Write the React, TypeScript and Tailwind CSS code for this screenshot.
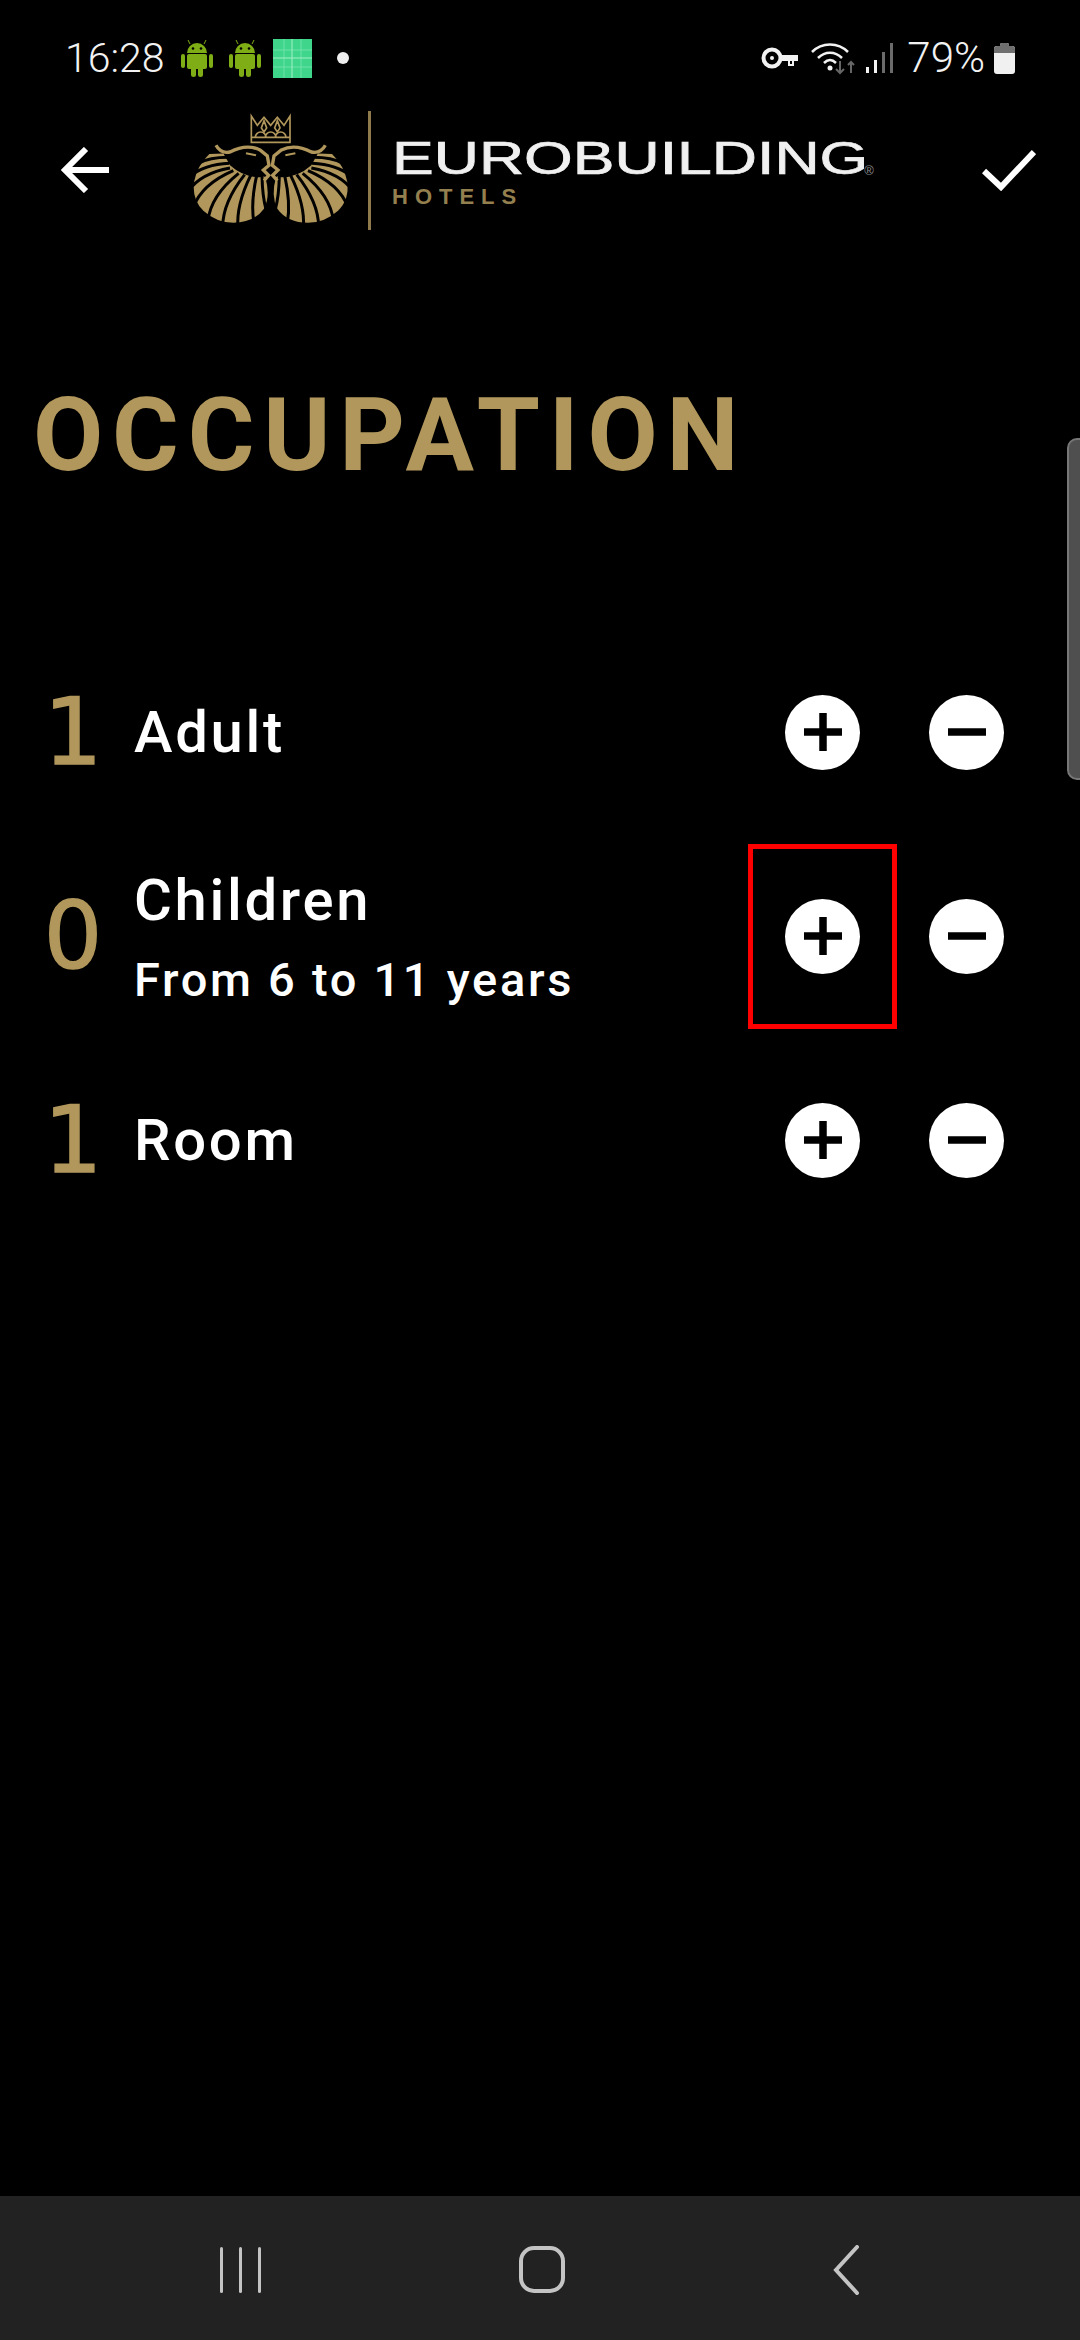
const GOLD = '#b1975b';

// black gaps that split the mane into strands: inner point, outer point, bulge (logo units)
const GAPS = [
  [150, 172, 55, 190, 12],
  [148, 190, 32, 228, 20],
  [150, 204, 26, 272, 28],
  [160, 212, 40, 322, 34],
  [176, 220, 84, 362, 34],
  [194, 224, 128, 380, 28],
  [212, 226, 174, 384, 22],
  [230, 226, 222, 368, 14],
  [246, 228, 258, 328, 6],
];

function gapPath([x1, y1, x2, y2, b]: number[]) {
  const dx = x2 - x1;
  const dy = y2 - y1;
  const len = Math.hypot(dx, dy);
  const cx = x1 + dx * 0.6 - (dy / len) * b;
  const cy = y1 + dy * 0.6 + (dx / len) * b;
  return `M${x1} ${y1}Q${cx} ${cy} ${x2} ${y2}`;
}

function Lion() {
  return (
    <g>
      <path
        d="M88 162Q52 196 42 246Q36 300 70 332Q110 368 160 368Q222 368 252 326Q272 288 256 232L150 160Z"
        fill={GOLD}
      />
      {GAPS.map((g, i) => (
        <path key={i} d={gapPath(g)} fill="none" stroke="#000" strokeWidth="9" />
      ))}
      <path d="M130 160Q150 150 205 148L258 170L262 196L244 210L262 226L240 232Q190 232 150 196Z" fill="#000" />
      <path
        d="M108 136Q122 162 150 156Q200 130 240 150L262 168L267 196L250 210L266 226L252 242"
        fill="none"
        stroke={GOLD}
        strokeWidth="10"
      />
      <path d="M198 160L228 166" stroke={GOLD} strokeWidth="6" />
    </g>
  );
}

function LogoMark() {
  return (
    <svg width="180" height="140" viewBox="0 0 540 420" className="shrink-0">
      <Lion />
      <g transform="translate(544 0) scale(-1 1)">
        <Lion />
      </g>
      <g fill="none" stroke={GOLD} strokeWidth="5">
        <path d="M214 127H330V48L312 76L292 52L272 76L252 52L232 76L214 48Z" />
        <path d="M214 112H330M226 112A16 16 0 0 1 258 112M256 112A16 16 0 0 1 288 112M286 112A16 16 0 0 1 318 112" />
        <path d="M252 62L244 84L252 96L260 84ZM292 62L284 84L292 96L300 84Z" />
      </g>
    </svg>
  );
}

function AndroidIcon() {
  return (
    <svg width="32" height="38" viewBox="0 0 32 38" fill="#7fad16">
      <path d="M6 14A10 10 0 0 1 26 14Z" />
      <path d="M9 5L7 1M23 5L25 1" stroke="#7fad16" strokeWidth="1" />
      <rect x="6" y="15" width="20" height="15" rx="2" />
      <rect x="0" y="15" width="4" height="14" rx="2" />
      <rect x="28" y="15" width="4" height="14" rx="2" />
      <rect x="10" y="26" width="5" height="12" rx="2.5" />
      <rect x="17" y="26" width="5" height="12" rx="2.5" />
      <circle cx="12" cy="9.5" r="1.3" fill="#000" />
      <circle cx="20" cy="9.5" r="1.3" fill="#000" />
    </svg>
  );
}

function GridTile() {
  return (
    <svg width="39" height="39" viewBox="0 0 39 39">
      <rect width="39" height="39" fill="#3fd68c" />
      <path d="M11 0V39M28 0V39M0 11H39M0 28H39" stroke="#6fe2a8" strokeWidth="1" />
      <path d="M19 0V39M0 19H39" stroke="#a4efc6" strokeWidth="1" />
    </svg>
  );
}

function StatusRight() {
  return (
    <div className="flex items-center ml-auto mr-[65px]">
      <svg width="37" height="22" viewBox="0 0 37 22" fill="none">
        <circle cx="11" cy="11" r="8.5" stroke="#f2f2f2" strokeWidth="4" />
        <circle cx="11" cy="11" r="2" fill="#f2f2f2" />
        <path d="M19 8H37V14H33V19H27V14H19Z" fill="#f2f2f2" />
        <rect x="29" y="14" width="2" height="3" fill="#000" />
      </svg>
      <svg width="46" height="34" viewBox="0 0 46 34" fill="none" className="ml-[13px]">
        <path d="M1 11C11 1 27 1 37 11" stroke="#f2f2f2" strokeWidth="2.5" />
        <path d="M7 17C14 10 24 10 31 17" stroke="#f2f2f2" strokeWidth="2.5" />
        <path d="M13 22C17 18 21 18 25 22" stroke="#f2f2f2" strokeWidth="2.5" />
        <circle cx="19" cy="27" r="2.5" fill="#f2f2f2" />
        <path d="M29 20V32M25 28L29 32L33 28" stroke="#666" strokeWidth="2" />
        <path d="M40 32V21M37 24L40 21L43 24" stroke="#666" strokeWidth="2" />
      </svg>
      <svg width="28" height="30" viewBox="0 0 28 30" className="ml-[9px]">
        <rect x="0" y="24" width="3" height="6" fill="#f2f2f2" />
        <rect x="8" y="17" width="3" height="13" fill="#f2f2f2" />
        <rect x="16" y="9" width="3" height="21" fill="#6b6b6b" />
        <rect x="24" y="0" width="3" height="30" fill="#6b6b6b" />
      </svg>
      <span className="ml-[13px] text-[42px] leading-none font-light text-[#f2f2f2]">79%</span>
      <svg width="21" height="31" viewBox="0 0 21 31" className="ml-[9px]">
        <path d="M6 2Q6 0 8 0H13Q15 0 15 2V3H18Q21 3 21 6V28Q21 31 18 31H3Q0 31 0 28V6Q0 3 3 3H6Z" fill="#f0f0f0" />
        <path d="M6 2Q6 0 8 0H13Q15 0 15 2V3H18Q21 3 21 6V10H0V6Q0 3 3 3H6Z" fill="#6f6f6f" />
      </svg>
    </div>
  );
}

function RoundButton({ kind, marked }: { kind: 'plus' | 'minus'; marked?: boolean }) {
  return (
    <div className="relative w-[75px] h-[75px] rounded-full bg-white flex items-center justify-center">
      <svg width="38" height="38" viewBox="0 0 38 38" fill="none" stroke="#000" strokeWidth="7.5">
        <path d={kind === 'plus' ? 'M0 19H38M19 0V38' : 'M0 19H38'} />
      </svg>
      {marked && (
        <div className="absolute left-[-37px] top-[-55px] w-[149px] h-[185px] border-[5px] border-[#ff0000]" />
      )}
    </div>
  );
}

function Row({ count, label, hint, marked }: { count: string; label: string; hint?: string; marked?: boolean }) {
  return (
    <div className="h-[204px] flex items-center pl-[33px] pr-[76px]">
      <span className="w-[80px] pt-[2px] text-center text-[92px] leading-none text-[#b1975b] font-['DejaVu_Sans',sans-serif] font-normal [-webkit-text-stroke:1.5px_#b1975b]">
        {count}
      </span>
      <div className={`ml-[21px] flex flex-col text-white font-['Roboto',sans-serif] font-medium ${hint ? 'pt-[4px]' : ''}`}>
        <span className="text-[58px] leading-[68px] tracking-[2.7px]">{label}</span>
        {hint && <span className="text-[47px] leading-[60px] mt-[16px] tracking-[2.7px]">{hint}</span>}
      </div>
      <div className="ml-auto flex items-center gap-[69px]">
        <RoundButton kind="plus" marked={marked} />
        <RoundButton kind="minus" />
      </div>
    </div>
  );
}

export default function App() {
  return (
    <div className="relative w-[1080px] h-[2340px] bg-black flex flex-col overflow-hidden font-['Roboto',sans-serif]">
      <div className="h-[100px] pt-[16px] flex items-center pl-[65px] shrink-0">
        <span className="text-[41px] leading-none font-light text-[#f2f2f2]">16:28</span>
        <div className="ml-[16px]"><AndroidIcon /></div>
        <div className="ml-[16px]"><AndroidIcon /></div>
        <div className="ml-[12px]"><GridTile /></div>
        <div className="ml-[25px] w-[12px] h-[12px] rounded-full bg-[#eeeeee]" />
        <StatusRight />
      </div>

      <div className="h-[140px] flex items-center pl-[60px] pr-[44px] shrink-0">
        <svg width="49" height="46" viewBox="0 0 49 46" fill="none" stroke="#fff" strokeWidth="6">
          <path d="M49 23H5M26 2L5 23L26 44" />
        </svg>
        <div className="ml-[71px]"><LogoMark /></div>
        <div className="ml-[8px] w-[3px] h-[119px] bg-[#8f7a4c]" />
        <div className="ml-[21px] pt-[6px] flex flex-col font-['Liberation_Sans',sans-serif]">
          <div className="flex items-end h-[40px]">
            <span className="origin-left scale-x-[1.36] text-[46px] leading-[40px] text-[#f0f0f0] whitespace-nowrap [-webkit-text-stroke:0.7px_#f0f0f0]">
              EUROBUILDING
            </span>
            <span className="ml-[122px] text-[13px] leading-[14px] text-[#8a8a8a]">®</span>
          </div>
          <span className="mt-[8px] text-[22px] leading-[22px] font-bold tracking-[7px] text-[#94804f]">HOTELS</span>
        </div>
        <svg width="54" height="42" viewBox="0 0 54 42" fill="none" stroke="#fff" strokeWidth="6" className="ml-auto">
          <path d="M2 22L19 38L52 3" />
        </svg>
      </div>

      <h1 className="mt-[150px] h-[90px] pl-[33px] text-[102px] leading-[90px] font-bold tracking-[8.8px] text-[#b1975b] font-['Roboto',sans-serif]">
        OCCUPATION
      </h1>

      <div className="mt-[150px] flex-1">
        <Row count="1" label="Adult" />
        <Row count="0" label="Children" hint="From 6 to 11 years" marked />
        <Row count="1" label="Room" />
      </div>

      <div className="h-[144px] shrink-0 bg-[#222222] flex items-center pt-[3px]">
        <div className="ml-[220px] flex gap-[16px]">
          <div className="w-[3px] h-[46px] rounded-full bg-[#c4c4c4]" />
          <div className="w-[3px] h-[46px] rounded-full bg-[#c4c4c4]" />
          <div className="w-[3px] h-[46px] rounded-full bg-[#c4c4c4]" />
        </div>
        <div className="ml-[258px] w-[46px] h-[47px] rounded-[15px] border-[4px] border-[#c4c4c4]" />
        <svg width="26" height="50" viewBox="0 0 26 50" fill="none" stroke="#c4c4c4" strokeWidth="4" strokeLinecap="round" className="ml-[268px]">
          <path d="M24 2L3 25L24 48" />
        </svg>
      </div>

      <div className="absolute right-0 top-[438px] w-[13px] h-[342px] rounded-l-[10px] bg-[#4f4f4f] border-l-[2px] border-y-[2px] border-[#777777]" />
    </div>
  );
}
